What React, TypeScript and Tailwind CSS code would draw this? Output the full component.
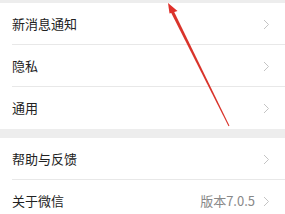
import React from "react";

const Chevron = () => (
  <svg width="7" height="11" viewBox="0 0 7 11" className="shrink-0">
    <path d="M1 1 L5.5 5.5 L1 10" fill="none" stroke="#c4c4c4" strokeWidth="1" />
  </svg>
);

const Row = ({ label, value, divider }: { label: string; value?: string; divider?: boolean }) => (
  <div className="relative flex items-center h-[42px] pl-[12px] pr-[15px] bg-white">
    <span className="flex-1 text-[13px] text-[#222]">{label}</span>
    {value && <span className="text-[13px] text-[#888] mr-[8px]">{value}</span>}
    <Chevron />
    {divider && <div className="absolute left-[12px] right-0 bottom-0 h-px bg-[#e8e8e8]" />}
  </div>
);

export default function App() {
  return (
    <div
      className="relative w-[285px] h-[214px] overflow-hidden bg-[#ededed]"
      style={{ fontFamily: '"Noto Sans CJK SC", "Noto Sans", sans-serif' }}
    >
      <div className="h-[3px]" />
      <Row label="新消息通知" divider />
      <Row label="隐私" divider />
      <Row label="通用" />
      <div className="h-[9px]" />
      <Row label="帮助与反馈" divider />
      <Row label="关于微信" value="版本7.0.5" />
      <svg className="absolute left-0 top-0" width="285" height="214" viewBox="0 0 285 214">
        <polygon points="172.4,8.3 229.45,125.78 228.55,126.22 169.6,9.7" fill="#d9342b" />
        <polygon points="168,3 177.5,11 169.5,13.5" fill="#e0302a" />
      </svg>
    </div>
  );
}
